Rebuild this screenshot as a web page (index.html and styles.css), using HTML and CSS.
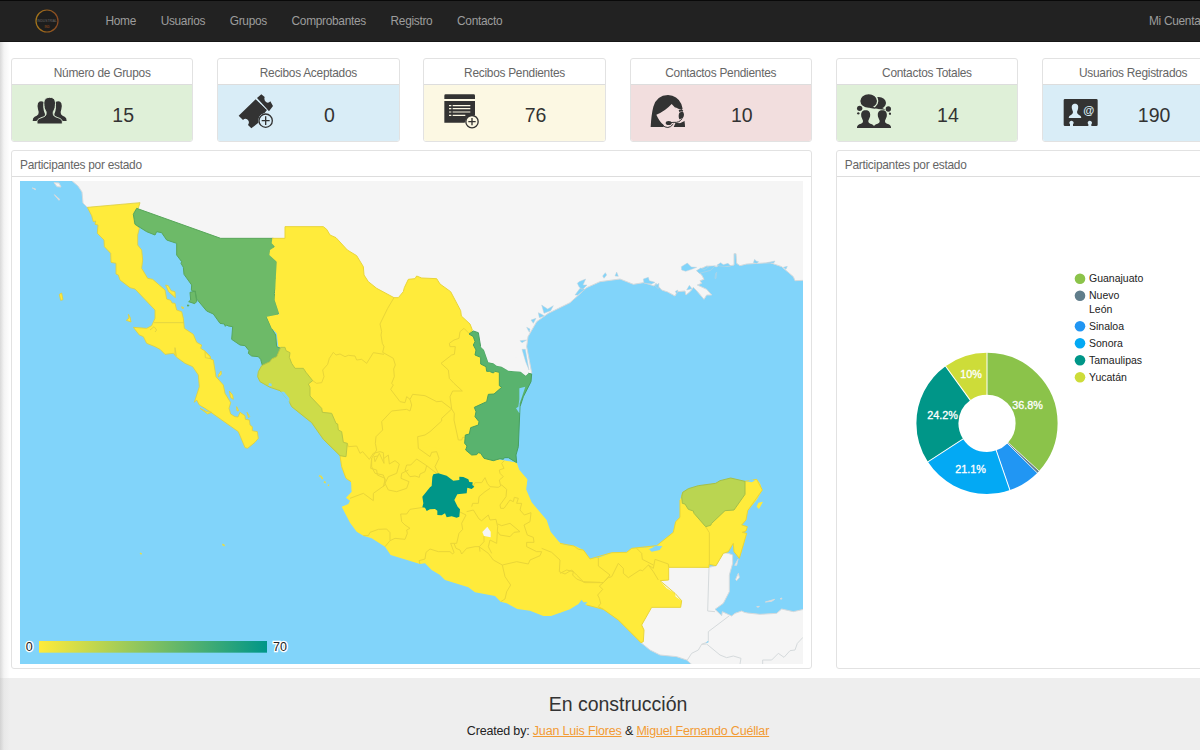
FILE: index.html
```html
<!DOCTYPE html>
<html lang="es">
<head>
<meta charset="utf-8">
<title>Panel</title>
<link rel="stylesheet" href="styles.css">
</head>
<body>
<div class="page">
<nav class="navbar">
  <svg class="brand" viewBox="0 0 24 24"><defs><linearGradient id="ring"><stop offset="0" stop-color="#a5761a"/><stop offset="1" stop-color="#8a4a22"/></linearGradient></defs><circle cx="12" cy="12" r="11" fill="#1d1d1d" stroke="url(#ring)" stroke-width="1.2"/><text x="12" y="13.4" class="brand-name">INDUSTRIAL</text><text x="12" y="19" class="brand-sub">IND</text></svg>
  <a>Home</a><a>Usuarios</a><a>Grupos</a><a>Comprobantes</a><a>Registro</a><a>Contacto</a>
  <a class="account">Mi Cuenta</a>
</nav>
<main class="board">
  <section class="card"><h2>Número de Grupos</h2><div class="stat green">
    <svg viewBox="95 282 105 105"><path d="M131 306q-14-6-18 4-3 8 0 18 4 10 1 15-4 5-11 7-6 3-6 13h20q2-8 13-12 5-4 4-9-8-16-3-36zM165 306q14-6 18 4 3 8 0 18-4 10-1 15 4 5 11 7 6 3 6 13h-20q-2-8-13-12-5-4-4-9 8-16 3-36z"/><path stroke="#dff0d8" stroke-width="3" d="M148 292c-15 0-19 11-17 24 0 9 3 13 6 19 1 7 0 11-4 14-10 5-22 6-23 16v7h76v-7c-1-10-13-11-23-16-4-3-5-7-4-14 3-6 6-10 6-19 2-13-2-24-17-24z"/></svg><b>15</b></div></section>
  <section class="card"><h2>Recibos Aceptados</h2><div class="stat blue">
    <svg viewBox="713 282 105 105"><path d="M766 298l34 32-8 10q-18 4-17 22l1 5-23 18-10-10q6-10-1-16-7-6-14 1l-13-13z"/><path d="M770 294l13-11 10 8q-3 9 4 15 7 5 13-2l8 14-12 16z"/><path d="M768 296l33 35" fill="none" stroke="#d9edf7" stroke-width="2.5" stroke-dasharray="6 3"/><circle cx="796" cy="362" r="22" fill="#d9edf7"/><circle cx="796" cy="362" r="20" fill="none" stroke="#333" stroke-width="4"/><path d="M784 360h10v-11h4v11h10v4h-10v11h-4v-11h-10z"/></svg><b>0</b></div></section>
  <section class="card"><h2>Recibos Pendientes</h2><div class="stat cream">
    <svg viewBox="132 282 105 105"><path d="M133 297v-10q0-4 4-4h84q4 0 4 4v10zM133 303h92v43q-26-1-31 22h-61z"/><path stroke="#fcf8e3" stroke-width="3.5" d="M147 317h7m4 0h53M147 326h7m4 0h53M147 336h7m4 0h53M147 346h7m4 0h38"/><circle cx="216" cy="365" r="18.5" fill="#fcf8e3" stroke="#333" stroke-width="4"/><path d="M205 363h9v-9h4v9h9v4h-9v9h-4v-9h-9z"/></svg><b>76</b></div></section>
  <section class="card"><h2>Contactos Pendientes</h2><div class="stat pink">
    <svg viewBox="750 282 105 105"><path d="M752 381q2-38 8-61 10-34 44-35 28 1 40 27 9 28 11 69h-34l8-18 9-11v-18l-9-8q-6-5-14-14-20 22-46 32 10 22 22 31v6z"/><path d="M826 322l12 6 12-2 6 6v30l-16 8-14-2z" fill="#f2dede"/><path d="M836 331l9-4 5 5-12 4zM838 338l10-4q8 10 0 21l-10 3q-4-10 0-20z"/><path d="M846 356q-8 13-24 11l-14 1" fill="none" stroke="#333" stroke-width="3"/><path d="M786 374q18 18 34-2" fill="none" stroke="#333" stroke-width="3"/><ellipse cx="806" cy="369" rx="9" ry="6"/><path d="M827 381l7-9 18-5 3 14z"/></svg><b>10</b></div></section>
  <section class="card"><h2>Contactos Totales</h2><div class="stat green">
    <svg viewBox="168 282 105 105"><ellipse cx="236" cy="309" rx="22" ry="18"/><path d="M242 322l15 7-24-2z"/><ellipse cx="206" cy="303" rx="27" ry="22" stroke="#dff0d8" stroke-width="4"/><path d="M218 318l10 9-22-4z"/><circle cx="179" cy="325" r="8"/><circle cx="175" cy="340" r="3.5"/><circle cx="265" cy="327" r="8"/><circle cx="270" cy="341" r="3.5"/><path d="M197 331c-12 0-15 9-13 19l5 12q1 6-6 9-13 3-12 13h102q1-10-12-13-7-3-6-9l5-12c2-10-1-19-13-19s-15 9-13 19l5 12q1 6-6 9-11 3-11 8 0-5-11-8-7-3-6-9l5-12c2-10-1-19-13-19z"/></svg><b>14</b></div></section>
  <section class="card"><h2>Usuarios Registrados</h2><div class="stat blue">
    <svg viewBox="787 282 105 105"><path d="M793 297h94q4 0 4 4v73q0 4-4 4h-15v-5q4-4 1-8-6-5-11 0-3 4 1 8v5h-46v-5q4-4 1-8-6-5-11 0-3 4 1 8v5h-15q-4 0-4-4v-73q0-4 4-4z"/><path fill="#d9edf7" d="M823 311c-9 0-11 7-9 16l3 9q0 5-5 8-8 2-8 10h38q0-8-8-10-5-3-5-8l3-9c2-9 0-16-9-16z"/><text x="864" y="342" class="at">@</text></svg><b>190</b></div></section>

  <section class="card wide"><h2>Participantes por estado</h2>
  <svg class="map" viewBox="60 543 2349 1449">
    <defs><linearGradient id="scale"><stop offset="0" stop-color="#ffeb3b"/><stop offset="1" stop-color="#009688"/></linearGradient></defs>
    <rect x="60" y="543" width="2349" height="1449" fill="#81d4fa"/>
    <g class="land">
      <path d="M213 540L234 558 246 576 249 609 262 622 500 700 1100 1100 1560 1130 1590 1125 1595 1118 1580 1040 1584 1010 1610 965 1645 940 1710 908 1760 863 1800 845 1860 837 1900 853 1930 848 1948 853 1962 858 1968 850 1985 870 2003 876 2025 888 2032 875 2055 873 2058 885 2072 873 2080 862 2090 872 2112 898 2120 885 2135 885 2120 868 2092 855 2105 850 2100 842 2112 838 2105 825 2090 812 2120 798 2150 800 2160 793 2180 799 2202 795 2202 761 2208 761 2210 790 2220 797 2240 792 2310 788 2345 800 2380 830 2385 842 2412 841 2412 540z"/>
      <path d="M162 548l15 1 6 12-12-1zM163 584l16 14-2 3zM97 564l10 3-1 2z"/>
      <g transform="translate(1680 1380)"><path d="M300 315L447 322 468 317 490 278 505 280 518 285 518 310 508 345 508 395 490 430 465 448 485 467 487 455 515 468 525 460 545 453 553 457 563 459 600 463 650 460 665 447 700 455 732 448 732 615 397 615 380 600 350 590 300 585 270 570 243 548 200 400z"/>
      <path fill="none" d="M447 322L443 453 465 455M507 468L445 515 445 545 425 553 415 570 395 580 382 600M425 553L440 552 480 585 500 593 520 588 543 595 540 612M608 612V600H635L655 580 672 592 690 572 705 570 712 550 729 532"/><path d="M524 316l10-18-4 18zM527 358l8-18 3 12-8 10zM616 426l28-8-9 6zM590 440l8-1-3 3zM660 416l6-2-2 4z"/></g>
    </g>
    <g class="inlet" transform="translate(1560 720)"><path d="M484 80l18-11 12 12 16 1-15 6-18 6-12-4zM177 125l20-8-8 18 12 0-14 15-10-10-5-10zM370 117l15-5 3 10 17 5-10 5-23-3zM165 165l15-20 15 3-22 17zM248 108l8-10 4 7-8 10zM285 108l5-12 5 13zM65 195l10 7 8 5 17-10-8 15-20 8zM55 218l10 5 8 5-15 5zM33 240l15-5-8 15zM20 262l10 5-2 10zM0 302l20-2-14 8zM6 328l10 0 10 57 1 5-10-25zM585 115l2-15 3-3-2 18zM700 68l4-10 4 5 8 2-5 5zM740 68l25-5-4 6zM790 82l12-3-4 9zM530 92l12-8 12 5 14-10 18-2-14 14-22 6-12 3zM405 138l12-8-2 16zM470 162l-4-8 8-4zM500 150l8-14 8 10zM590 76l12-8 8 6 14-4 8 8-20 2z"/></g>
    <g transform="translate(30 525)">
      <g class="yellow"><path d="M232 97L390 83 385 100 372 110 373 145 388 160 383 180 383 210 395 225 398 255 395 280 413 310 428 313 465 345 470 372 482 376 486 384 495 385 500 405 515 410 520 430 523 460 550 478 560 502 575 510 572 520 585 528 600 543 602 552 610 555 618 605 640 630 645 655 662 683 657 700 662 717 675 725 684 726 690 712 705 722 706 733 718 735 720 750 727 755 727 767 742 770 745 790 735 802 713 820 705 818 685 770 600 710 585 700 568 690 560 675 553 682 560 660 568 635 565 600 548 575 525 565 500 547 490 535 465 538 450 523 435 515 410 505 400 485 388 480 370 457 410 460 425 452 435 430 435 405 375 342 360 338 330 315 325 300 318 297 318 265 303 262 302 235 283 215 282 195 262 175 264 150 255 148 257 138 250 140 245 122z"/>
      <path d="M467 330l8 2 8 15 12 3 1 18-20-18zM585 530l15 15 1 6-15-3zM148 358l7-4 4 20-7 2zM355 418l5 8 3 15-14-5 8-7zM625 600l8-12 1 10-9 8zM658 648l10 12 2 13-8-5zM711 712l8 13-3 3zM680 695l6 12-5 1zM515 395l7 4-6 1zM570 700l20 10 15 2-12 5z"/><path fill="none" d="M432 443H522M420 465l12-10 8 10-5 6M495 540v-22l4 25"/></g>
      <path class="sonora" d="M380 100L632 190H790L787 205 793 213 790 228 780 228 782 243 800 260 802 300 798 310 802 320 793 355 796 380 807 412 802 420 770 427 785 460 797 480 800 515 812 520 800 545 778 560 770 568 757 571 752 553 745 545 725 543 715 535 717 527 705 512 690 510 665 493 668 455 655 453 650 450 646 454 643 447 630 445 610 417 590 408 560 372 555 350 544 346 545 330 522 298 520 277 513 265 515 260 500 240 500 205 470 195 455 173 440 170 435 180 410 170 375 148 370 118zM540 352L556 348 560 380 554 386 536 380 542 375zM532 390l5 1-3 3z"/>
    </g>
    <g class="fill">
      <path transform="translate(780 600)" d="M37 115H75V80H190L200 88 210 105 228 113 262 150 290 167 310 200 312 225 325 245 350 265 402 293 415 293 430 275 433 263 445 238 465 236 470 228 485 234 530 236 540 252 572 275 602 332 604 348 630 372 637 390 650 430 685 500 730 515 735 580 700 780 770 788 775 808 802 840 798 872H275L273 845 258 835 245 800 240 767 62 442 55 440 50 400 35 385 20 350 58 343 44 300 50 185 28 165 30 150 45 140 35 130z"/>
      <path transform="translate(990 1140)" d="M30 230L38 262 48 290 66 305 65 335 48 353 60 362 55 372 35 380 60 428 80 455 100 467 125 475 165 500 182 525 270 552 285 550 305 570 330 585 345 600 415 622 435 637 495 648 512 665 530 670 562 687 600 692 640 708 663 708 720 688 745 672 770 673 815 684V533L780 537 760 510 735 498 705 495 688 487 662 455 650 420 605 367 587 325 592 298 568 270 560 248 300 200z"/>
      <path transform="translate(1680 1380)" d="M0 250L15 258 42 258 55 268 70 270 90 297 115 293 155 278 200 277 215 265 265 262 290 257 340 217 347 185 360 172 360 120 368 95 500 60 555 64 575 67 590 58 600 70 607 90 590 120 563 152 558 180 545 195 562 200 558 213 547 217 560 220 552 250 538 295 522 275 520 250 505 275 490 280 468 317 447 313V322H326V360L300 362 320 385 345 400 347 410 365 422 362 442H275L245 495 252 510 250 545 243 548 175 480 130 448 80 435 65 430 45 435 0 458zM590 140l5-12 14-3-12 22z"/>
    </g>
    <g class="states">
      <g transform="translate(780 600)"><path d="M402 293L383 325 360 372 365 395 363 405 367 430 372 440 368 457 400 475 406 495 401 507 403 530 395 550 400 555 392 568 420 605 435 608 440 590 450 598 458 583 495 587 530 605 545 604 575 627M158 542L170 550 185 548 192 530 188 510 203 493 208 475 220 457 228 465 240 462 255 470 265 466 285 468 290 480 305 478 320 490 340 458 372 463M637 390L627 400 612 385 600 395 597 415 582 420 568 430 570 440 586 440 583 463 575 465 543 490 565 510 568 535 582 550 607 573 578 573 570 590 575 627 583 640 582 660 595 720 605 720 608 712 615 712M450 598L455 615 450 633 440 628 395 633 365 665 368 690 348 710 346 730 350 750 335 775 335 800 345 820 370 825 375 840 370 860M575 627L545 655 545 663 510 695 495 705 473 710 475 745 510 770 515 757 530 755 537 775 525 800 535 820M262 730L265 740 290 738 300 760 308 755 328 778 340 760 360 755 370 758 372 790 358 760 345 785 342 770 354 768M372 775L385 765 388 792 405 782 418 792 410 820 385 830 375 850M435 810L440 795 452 795 470 777 500 797 495 815 480 822 478 832 465 828 450 830zM500 797L530 820"/><path d="M240 767L245 800 258 835 273 845M37 115H75V80H190L200 88 210 105 228 113 262 150 290 167 310 200 312 225 325 245 350 265 402 293 415 293 430 275 433 263 445 238 465 236 470 228 485 234 530 236 540 252 572 275 602 332 604 348 630 372 637 390"/></g>
      <g transform="translate(990 1140)"><path d="M125 235L122 265 140 270 142 285 165 295 165 315 130 340 130 362 100 340 60 355M165 310L175 330 200 335 230 325 237 305 213 295 215 280 235 270M280 382L240 388 230 402 212 402 215 425 225 435 240 445 230 450 232 460 225 478 195 475 180 482 165 500M100 467L115 467 120 457 145 448 170 447 180 458V482M270 552L267 542 285 537 288 517 300 507 325 515 360 515 368 522 372 517 362 490 380 490 387 460 398 448 395 430 408 405 388 395M372 490L378 505 390 510 395 522 410 505 435 500 447 500 475 520 490 540 517 555 525 590 542 615 530 635 525 657 512 665M430 318L435 308 455 308 465 293 472 310 480 320 505 322 515 315 530 328 528 350 510 375 512 385 522 385 540 360 550 365 553 352 565 355 560 370 575 370 570 390 583 405 603 398 600 425 582 435 592 465 610 472 612 487 590 487 590 500 620 515 635 515 630 527 600 540 595 552 560 545 517 555M425 380L428 370 445 370 447 350 465 335 480 325M410 395L430 390 447 417 455 422 475 405 480 420 498 418 503 440 500 490 480 480 475 500 485 520M503 432L515 437 540 430 570 455 552 457 540 470 510 465 503 455M635 505L665 517 690 540 688 575 705 582 725 570 740 585 760 605 810 607M523 242L515 250 522 265 508 270 510 280 520 290 508 300 512 318M462 468L462 485 448 500 450 515"/></g>
      <g transform="translate(1680 1380)"><path d="M0 340L20 330 40 335 38 345 50 357 65 363 75 368 130 368 150 345 115 318 115 293M130 368L118 378 128 388 113 405 118 415 122 430 115 440 130 448M130 368L145 353 155 350 175 310 190 325 190 340 205 353 240 330 248 332 265 315 280 325 285 298 325 312 326 322M230 265L245 280 247 298 280 315M437 200L448 218V313M265 315L280 335 295 360"/><path d="M360 120V172L347 185 340 217 290 257 215 265 200 277 155 278 90 297 70 270 55 268 42 258 0 250M555 64L590 58 607 90 563 152 558 180 545 195 562 200 558 213 547 217 560 220 538 295 522 275 520 250 505 275 490 280 468 317 447 313V322H326V360L300 362 345 400 365 422 362 442H275L245 495 252 510 250 545 243 548 175 480 130 448 80 435"/></g>
    </g>
    <path transform="translate(780 600)" class="sinaloa" d="M62 442H75L78 452 90 458 88 472 95 490 105 505 130 505 138 517 158 542 145 552 150 562V588L185 625 187 637 215 640 228 670 233 672 235 690 245 695 250 727 262 730 258 770 240 767 190 718 155 668 95 620 85 600 60 572 30 562 0 545 -7 530 -5 515 5 497 30 485 35 477 50 470z"/>
    <path transform="translate(780 600)" class="tamaulipas" d="M640 393L655 398 662 440 672 450 685 487 700 490 710 497 725 500 745 512 782 515 797 527 805 520 815 522 813 545 790 590 780 620 775 740 768 765 770 788 745 773 733 773 730 778 720 776 700 782 672 775 662 760 655 758 650 764 635 765 617 750 621 738 614 730 616 705 628 702 632 683 655 675 657 665 645 650 648 635 643 622 680 605 685 583 702 582 725 562 718 557V517L705 514 700 519 688 514 680 514 678 500 662 492V472L645 465 648 450 640 435 645 425 640 410 627 402z"/>
    <path transform="translate(780 600)" fill="#f5f5f5" d="M662 440L672 450 685 487 700 490 710 497 725 500 745 512 782 515 797 527 805 520 780 480 700 430z"/>
    <path transform="translate(780 600)" fill="#81d4fa" d="M778 565l18-5-10 30-7 20-1 30-10-15 7-5 3-22zM27 549l8 2 0 8-10-1zM62 575l10 0 16 20 0 14-10-15z"/>
    <g transform="translate(990 1140)"><path fill="#009688" d="M310 283L325 280 350 287 370 302 388 300 388 290 400 291 415 298 418 306 428 307 427 315 433 320 425 327 412 323 410 340 382 343 373 360 383 380 390 388 388 410 380 413 365 409 350 412 345 400 335 406 322 405V392L315 387 300 388 290 393 285 383 277 382 280 370 277 350 300 322 305 318 307 290z"/><path fill="#f5f5f5" d="M472 440l10 15v17l-20-4-5-12z"/></g>
    <path transform="translate(1680 1380)" class="yucatan" d="M368 97L385 86 415 77 467 70 480 62 512 54 555 64V103L522 150 495 152 455 190 452 196 437 200 402 160 400 153 385 148 375 132 367 130 365 110z"/>
    <path transform="translate(1680 1380)" fill="#81d4fa" d="M267 268l10-5 10-6 20 1-8 12-24 5zM565 62l12-4 6 4-8 4zM55 433l10-14 5 8 12 0-7 8zM437 550l7-8 2 5z"/>
    <path class="specks" d="M667 1633l7 4M420 1660l5 2M957 1427l6 2 5 8M972 1445l5 3M984 1455l3 2"/>
    <rect x="117" y="1923" width="684" height="35" fill="url(#scale)"/>
    <text class="tick" x="77" y="1953">0</text><text class="tick" x="819" y="1953">70</text>
  </svg></section>

  <section class="card side"><h2>Participantes por estado</h2>
  <svg class="donut" viewBox="837 177 387 490">
    <g fill="none" stroke-width="42" transform="rotate(-90 987 423.3)">
      <circle cx="987" cy="423.3" r="49.6" pathLength="100" stroke="#8bc34a" stroke-dasharray="36.8 63.2"/>
      <circle cx="987" cy="423.3" r="49.6" pathLength="100" stroke="#607d8b" stroke-dasharray=".6 99.4" stroke-dashoffset="-36.8"/>
      <circle cx="987" cy="423.3" r="49.6" pathLength="100" stroke="#2196f3" stroke-dasharray="7.3 92.7" stroke-dashoffset="-37.4"/>
      <circle cx="987" cy="423.3" r="49.6" pathLength="100" stroke="#03a9f4" stroke-dasharray="21.1 78.9" stroke-dashoffset="-44.7"/>
      <circle cx="987" cy="423.3" r="49.6" pathLength="100" stroke="#009688" stroke-dasharray="24.2 75.8" stroke-dashoffset="-65.8"/>
      <circle cx="987" cy="423.3" r="49.6" pathLength="100" stroke="#cddc39" stroke-dasharray="10 90" stroke-dashoffset="-90"/>
    </g>
    <g stroke="#fff" transform="translate(987 423.3)"><path d="M0-28V-72"/><path d="M0-28V-72" transform="rotate(132.5)" stroke-width=".7"/><path d="M0-28V-72" transform="rotate(134.6)" stroke-width=".7"/><path d="M0-28V-72" transform="rotate(161.1)"/><path d="M0-28V-72" transform="rotate(236.9)"/><path d="M0-28V-72" transform="rotate(324)"/></g>
    <g class="pct"><text x="1027.5" y="409">36.8%</text><text x="970.5" y="473.3">21.1%</text><text x="942.5" y="418.5">24.2%</text><text x="971" y="378.3">10%</text></g>
    <g><circle cx="1080" cy="278.7" r="5.3" fill="#8bc34a"/><circle cx="1080" cy="295.7" r="5.3" fill="#607d8b"/><circle cx="1080" cy="326.3" r="5.3" fill="#2196f3"/><circle cx="1080" cy="343.3" r="5.3" fill="#03a9f4"/><circle cx="1080" cy="360.2" r="5.3" fill="#009688"/><circle cx="1080" cy="377.2" r="5.3" fill="#cddc39"/></g>
    <g class="legend"><text x="1089" y="282.4">Guanajuato</text><text x="1089" y="299.4">Nuevo</text><text x="1089" y="313">León</text><text x="1089" y="330">Sinaloa</text><text x="1089" y="347">Sonora</text><text x="1089" y="364">Tamaulipas</text><text x="1089" y="381">Yucatán</text></g>
  </svg></section>
</main>
<footer class="footer"><h3>En construcción</h3><p>Created by: <a>Juan Luis Flores</a> &amp; <a>Miguel Fernando Cuéllar</a></p></footer>
</div>
</body>
</html>
```
FILE: styles.css
```css
* { box-sizing: border-box; }
html, body { margin: 0; height: 100%; overflow: hidden; }
body { font-family: "Liberation Sans", Arial, sans-serif; font-size: 12px; color: #333; background: #fff; }
.page { width: 1236px; height: 750px; display: flex; flex-direction: column; background: linear-gradient(90deg, #d9d9d9, #f4f4f4 4px, #fff 10px); }
.navbar { height: 42px; flex: none; background: #222; border-top: 1px solid #090909; border-bottom: 1px solid #161616; display: flex; align-items: center; padding-left: 35px; font-size: 11.9px; letter-spacing: -0.3px; color: #9d9d9d; }
.navbar a { margin-right: 24.6px; }
.brand { width: 24px; height: 24px; margin-right: 46.5px; letter-spacing: 0; }
.brand-name { font-size: 3.3px; fill: #686868; text-anchor: middle; }
.brand-sub { font-size: 3px; fill: #a4561c; text-anchor: middle; }
.navbar .account { margin: 0 35.5px 0 auto; white-space: nowrap; }
.board { display: grid; grid-template-columns: repeat(6, 182.4px); column-gap: 23.8px; row-gap: 8px; grid-template-rows: 84px 519px; padding: 16px 0 0 11px; }
.card { background: #fff; border: 1px solid #e2e2e2; border-radius: 3px; overflow: hidden; }
.card h2 { margin: 0; height: 26px; line-height: 28px; border-bottom: 1px solid #ddd; font-size: 11.9px; letter-spacing: -0.27px; font-weight: normal; color: #666; text-align: center; }
.wide { grid-column: span 4; }
.side { grid-column: span 2; }
.wide h2, .side h2 { text-align: left; padding-left: 8px; }
.stat { height: 57px; display: flex; padding: 9px 0 0 19.7px; }
.stat svg { width: 35px; height: 35px; fill: #333; }
.stat b { width: 113px; text-align: center; font-weight: normal; font-size: 19.5px; line-height: 43px; }
.green { background: #dff0d8; }
.blue { background: #d9edf7; }
.cream { background: #fcf8e3; }
.pink { background: #f2dede; }
.at { font-size: 34px; font-weight: bold; fill: #d9edf7; text-anchor: middle; }
.map { display: block; width: 783px; height: 483px; margin: 4px 0 0 8px; }
.land { fill: #f5f5f5; stroke: #d5dadc; stroke-width: 3; }
.inlet { fill: #81d4fa; stroke: #c5d3da; stroke-width: 1.5; }
.yellow { fill: #ffeb3b; stroke: #dccf45; stroke-width: 2.5; }
.fill { fill: #ffeb3b; }
.states { fill: none; stroke: #e9d538; stroke-width: 3; }
.sonora { fill: #6dba68; stroke: #58a75b; stroke-width: 3; }
.sinaloa { fill: #cddc49; stroke: #b9c743; stroke-width: 3; }
.tamaulipas { fill: #59b36e; stroke: #47a060; stroke-width: 3; }
.yucatan { fill: #bad551; stroke: #a4bf49; stroke-width: 3; }
.specks { fill: none; stroke: #e6dc48; stroke-width: 5; }
.tick { font-size: 37.5px; fill: #222; stroke: #fff; stroke-width: 8; paint-order: stroke; }
.donut { display: block; width: 387px; height: 490px; }
.pct { font-size: 10.8px; fill: #fff; stroke: #fff; stroke-width: .3; text-anchor: middle; }
.legend { font-size: 10.5px; fill: #222; }
.footer { flex: 1; margin-top: 9px; background: linear-gradient(90deg, #d2d2d2, #e8e8e8 4px, #eee 10px); text-align: center; color: #222; }
.footer h3 { margin: 15px 0 0; font-size: 19.5px; line-height: 22px; font-weight: normal; color: #333; }
.footer p { margin: 8px 0 0; font-size: 12.5px; letter-spacing: -0.18px; line-height: 16px; }
.footer a { color: #f29b34; text-decoration: underline; }
```
